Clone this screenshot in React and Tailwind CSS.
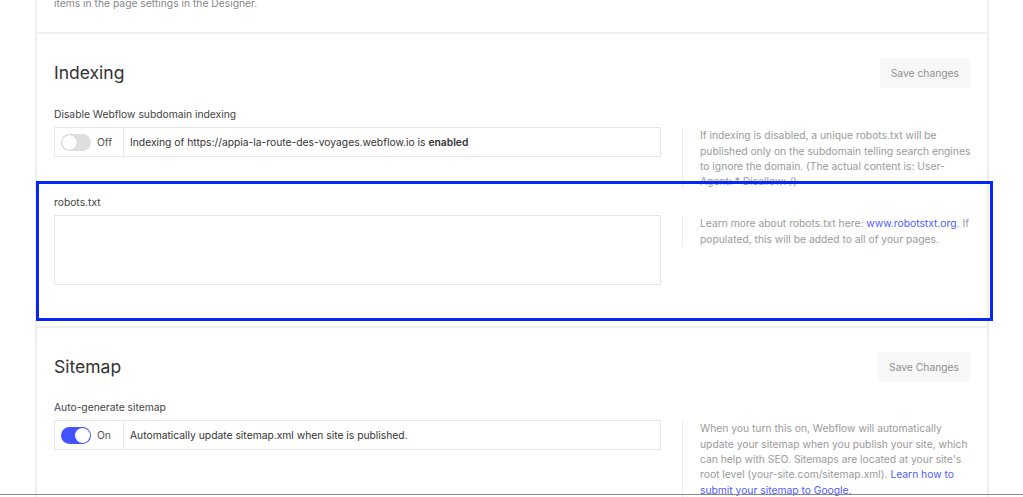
import React from "react";

function Toggle({ on }) {
  return on ? (
    <span className="relative inline-block h-[17px] w-[30px] rounded-full bg-[#4353ff]">
      <span className="absolute right-[1px] top-[1px] h-[15px] w-[15px] rounded-full bg-white" />
    </span>
  ) : (
    <span className="relative inline-block h-[17px] w-[30px] rounded-full bg-[#dedede]">
      <span className="absolute left-[1px] top-[1px] h-[15px] w-[15px] rounded-full bg-white shadow-[0_0_1px_rgba(0,0,0,0.25)]" />
    </span>
  );
}

function SwitchField({ on, children }) {
  return (
    <div className="mt-[5px] flex h-[30px] border border-[#e6e6e6]">
      <div className="flex w-[69px] shrink-0 items-center gap-[6px] border-r border-[#e6e6e6] pl-[6px] text-[10.3px] text-[#555]">
        <Toggle on={on} />
        <span>{on ? "On" : "Off"}</span>
      </div>
      <div className="flex items-center pl-[6px] text-[10.3px] text-[#333]">{children}</div>
    </div>
  );
}

function Help({ children, className = "" }) {
  return (
    <div className={"ml-[21px] mt-[22px] w-[292px] shrink-0 self-start border-l border-[#ececec] pl-[17px] text-[10.3px] leading-[15.3px] text-[#9a9a9a] " + className}>
      {children}
    </div>
  );
}

function Header({ title, button }) {
  return (
    <div className="flex h-[30px] items-center justify-between">
      <h2 className="text-[17.5px] text-[#333]">{title}</h2>
      <button className="h-[30px] rounded-[2px] bg-[#f7f7f7] px-[11px] text-[10.3px] text-[#8f8f8f]">{button}</button>
    </div>
  );
}

function Label({ children }) {
  return <div className="h-[16px] text-[10.3px] leading-[16px] text-[#444]">{children}</div>;
}

export default function App() {
  return (
    <div className="relative h-[497px] w-full overflow-hidden bg-white font-['Inter',sans-serif]">
      <div className="ml-[35px] mt-[-7px] w-[954px] border-x-2 border-[#efefef]">
        <section className="px-[17px] pb-[21px] pt-[3px]">
          <p className="text-[10.3px] leading-[15.3px] text-[#888]">items in the page settings in the Designer.</p>
        </section>
        <section className="border-t-2 border-[#efefef] px-[17px] pb-[41px] pt-[24px]">
          <Header title="Indexing" button="Save changes" />
          <div className="mt-[18px] flex">
            <div className="w-[607px] shrink-0">
              <Label>Disable Webflow subdomain indexing</Label>
              <SwitchField on={false}>
                <span>
                  Indexing of https://appia-la-route-des-voyages.webflow.io is <b className="font-semibold">enabled</b>
                </span>
              </SwitchField>
            </div>
            <Help>
              If indexing is disabled, a unique robots.txt will be published only on the subdomain telling search engines to ignore the domain. (The actual content is: User-Agent: * Disallow: /)
            </Help>
          </div>
          <div className="mt-[5px] flex">
            <div className="w-[607px] shrink-0">
              <Label>robots.txt</Label>
              <textarea className="mt-[5px] block h-[70px] w-full resize-none border border-[#e6e6e6] outline-none" />
            </div>
            <Help>
              Learn more about robots.txt here: <span className="text-[#4f5dff]">www.robotstxt.org</span>. If populated, this will be added to all of your pages.
            </Help>
          </div>
        </section>
        <section className="border-t-2 border-[#efefef] px-[17px] pb-[40px] pt-[24px]">
          <Header title="Sitemap" button="Save Changes" />
          <div className="mt-[17px] flex">
            <div className="w-[607px] shrink-0">
              <Label>Auto-generate sitemap</Label>
              <SwitchField on={true}>
                <span>Automatically update sitemap.xml when site is published.</span>
              </SwitchField>
            </div>
            <Help>
              When you turn this on, Webflow will automatically update your sitemap when you publish your site, which can help with SEO. Sitemaps are located at your site's root level (your-site.com/sitemap.xml). <span className="text-[#4f5dff]">Learn how to submit your sitemap to Google.</span>
            </Help>
          </div>
        </section>
      </div>
      <div className="pointer-events-none absolute left-[36px] top-[181px] h-[140px] w-[957px] border-[3px] border-[#0527f5]" />
      <div className="absolute bottom-[2px] left-0 right-0 h-px bg-[#8a8a8a]" />
    </div>
  );
}
